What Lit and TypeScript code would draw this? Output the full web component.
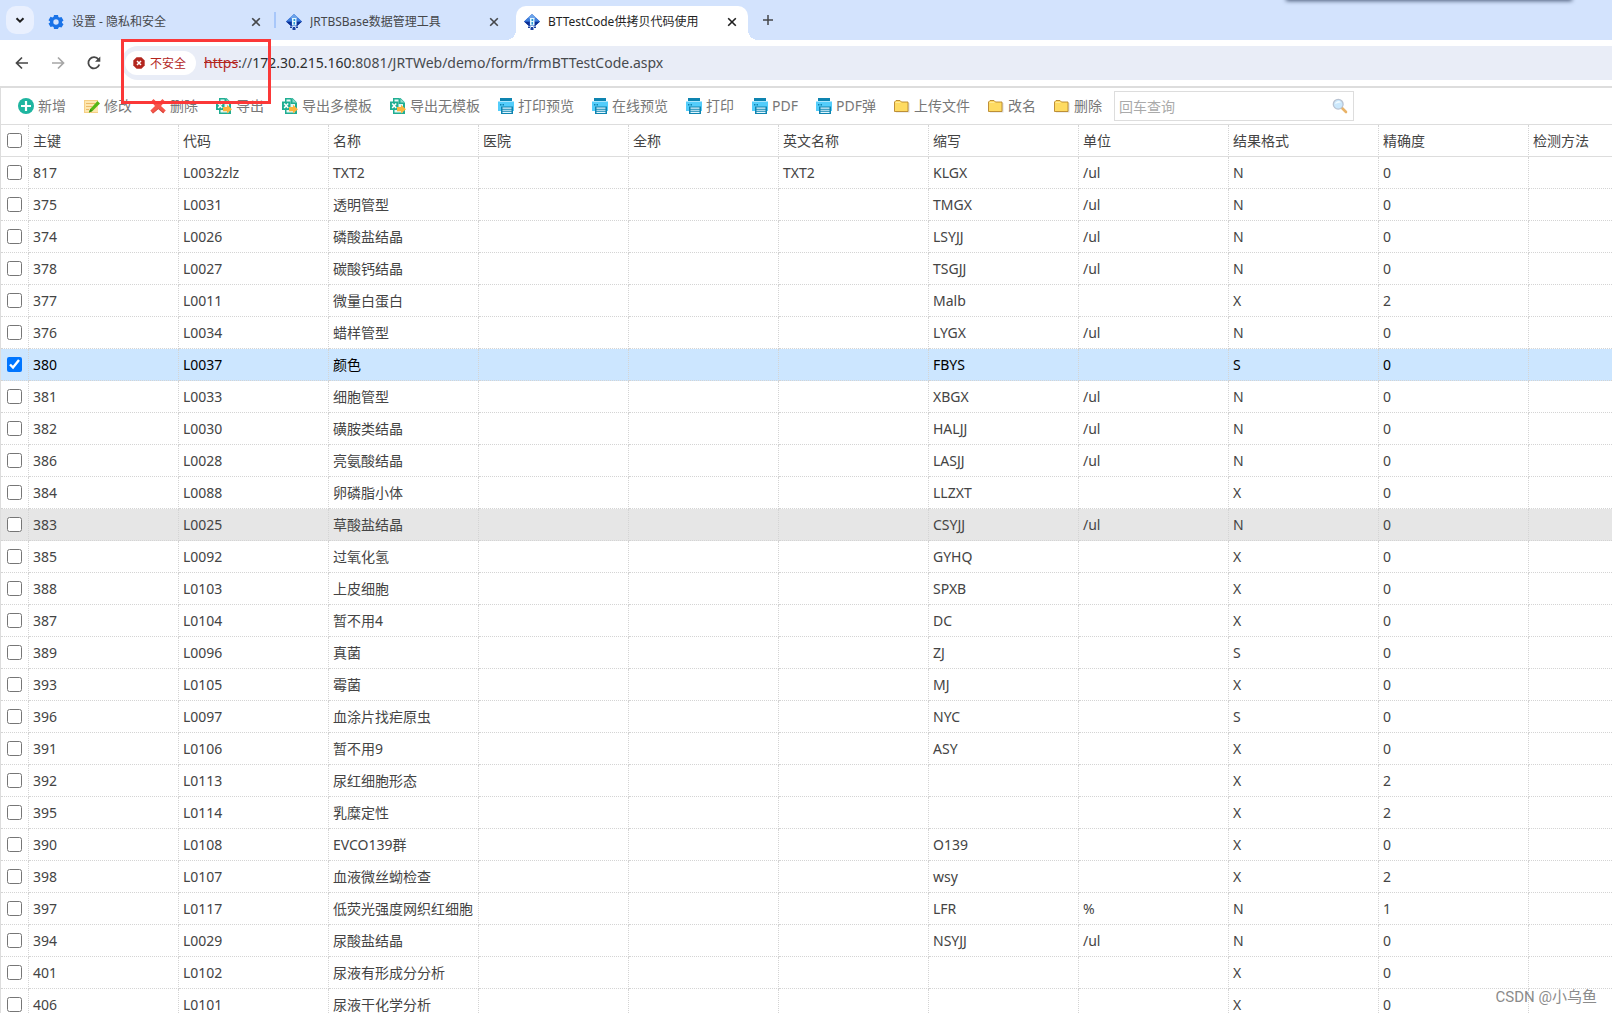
import { LitElement, html, css, svg, nothing } from "lit";
import { customElement, state } from "lit/decorators.js";
import { classMap } from "lit/directives/class-map.js";

const gear = svg`<path fill="#1a73e8" fill-rule="evenodd" d="M6 1h4l.4 1.9 1.2.7 1.9-.6 2 3.4-1.500 1.400v1l1.500 1.400-2 3.400-1.900-.600-1.200.700L10 15H6l-.400-1.900-1.200-.700-1.900.600-2-3.400L2 8.600v-1L.5 6.200l2-3.400 1.900.600 1.200-.700zM8 5.300a2.700 2.700 0 1 0 0 5.400 2.700 2.700 0 0 0 0-5.400z"/>`;
const diamond = svg`<path fill="#2257c4" d="M8 0l8 7.500-5 4.500H5L0 7.500z"/><path fill="#6ba3ea" d="M8 0l4.500 4.200L8 5.500 3.500 4.200z"/><path fill="#0c2f93" d="M0 7.500h5.500V12H5zM16 7.500h-5.500V12h.5z"/><path fill="#3f7fdd" d="M3.500 4.300L6 5v2.500H.500zM12.500 4.300L10.500 5v2.500h5z"/><path fill="#e2f6fd" d="M6 4h4.500v7.500H6z"/><path fill="#2b9ad8" d="M7.500 5h1.700v2H7.500zM7.500 8H9v2.500H7.500z"/><path fill="#1b409f" d="M4 12.500h2v1.500H4zM10 12.500h2v1.500h-2zM6.500 13h3v3h-3z"/><path fill="#a9c6ef" d="M6 12h1v2H6zM9 12h1v2H9z"/>`;
const add = svg`<circle cx="8" cy="8" r="8" fill="#1fb5a0"/><path fill="#fff" d="M6.900 3h2.200v3.900H13v2.200H9.100V13H6.900V9.100H3V6.900h3.900z"/>`;
const edit = svg`<path fill="#fde7b0" d="M0 2h14v13H0z"/><path fill="#f6cf84" d="M0 2h14v1H0zM0 14h14v1H0zM0 2h1v13H0z"/><path fill="#edba68" d="M2 5h9v1H2zM2 8h6v1H2zM2 11h3v1H2z"/><path fill="#56b614" d="M13.500 3L16 5.500 8.500 13l-3.500 1.500L6.200 11z"/><path fill="#398c0c" d="M6.200 11l2.300 2L5 14.500z"/>`;
const remove = svg`<path fill="#f6564b" d="M3.500 1L8 5.200 12.500 1 15 3.500 11 8l4.800 4.500-2.600 2.700L8.300 11 3 15.500 .4 12.500 5 8 1 3.500z"/><path fill="#d94a40" d="M.4 12.500L3 15.500 8.300 11l4.900 4.200 1-1.100L8.200 10.200 3 14.500z"/>`;
const excel = svg`<path fill="#1fae92" d="M3 0h7.500L15 4.500V16H3z"/><path fill="#e6f7f3" d="M4.500 1.500h4V6H13v8.500H4.500z"/><path fill="#8edccb" d="M9.500 0l5.500 5h-5.500z"/><path fill="#1fae92" d="M9 1h1.500v3.500H14V6H9z"/><path fill="#1fae92" d="M0 3.500h8.500v8.500H0z"/><path stroke="#fff" stroke-width="1.500" d="M2.200 5.500l4 4.600M6.200 5.500l-4 4.600"/><path fill="#fbb53c" d="M7 9h4V6.800l5 4.400-5 4.400v-2.400H7z"/>`;
const printer = svg`<path fill="#0e84b0" d="M2 0h12v3H2z"/><path fill="#53cdfb" d="M0 3.500h16V13H0z"/><path fill="#0e84b0" d="M2 6h1.500v1.500H2zM4.500 6H6v1.500H4.500zM3 8.500h12V16H3z"/><path fill="#dff5fe" d="M4.500 9.500h9v1.200h-9zM4.500 11.700h9v1.100h-9zM4.500 13.800h9v1.200h-9z"/>`;
const folder = svg`<path fill="#b9b9b9" opacity=".5" d="M2 5h13.500v9.500H2z"/><path fill="#fedb62" stroke="#b8862a" stroke-width=".9" d="M.5 4L2 2.500h4L7.500 4H14v9.500H.5z"/><path fill="#ffe998" d="M1.500 4h5v1h-5z"/>`;
const magnifier = svg`<path stroke="#e9b368" stroke-width="2.600" stroke-linecap="round" d="M10 10l4 4"/><circle cx="6.200" cy="6.200" r="4.900" fill="#cbe8fc" stroke="#b9c3d2" stroke-width="1.300"/><path fill="#eef9ff" d="M3 6a3.300 3.300 0 0 1 6-1.500C7 4.500 5 5 3 6z"/>`;
const cross = svg`<path stroke="currentColor" stroke-width="1.600" d="M4.200 4.200l7.600 7.600M11.800 4.200l-7.600 7.600"/>`;
const plus = svg`<path stroke="currentColor" stroke-width="1.500" d="M8 3v10M3 8h10"/>`;
const chevron = svg`<path fill="none" stroke="currentColor" stroke-width="2" d="M4.500 6.300L8 9.700l3.500-3.400"/>`;
const back = svg`<path fill="none" stroke="currentColor" stroke-width="1.700" d="M14 8H3M8 2.500L2.500 8 8 13.500"/>`;
const forward = svg`<path fill="none" stroke="currentColor" stroke-width="1.700" d="M2 8h11M8 2.500L13.500 8 8 13.500"/>`;
const reload = svg`<path fill="none" stroke="currentColor" stroke-width="1.800" d="M13.300 9.500A5.600 5.600 0 1 1 12.500 4.500"/><path fill="currentColor" d="M14.300 1.500v5.300H9z"/>`;
const danger = svg`<path fill="#b3261e" d="M5.200 1.500h5.600l3.700 3.700v5.600l-3.700 3.700H5.200l-3.700-3.700V5.200z"/><path stroke="#fff" stroke-width="1.700" d="M5.700 5.700l4.600 4.600M10.300 5.700l-4.600 4.600"/>`;

const icon = (shape: unknown, size = 16) =>
  html`<svg class="icon" width=${size} height=${size} viewBox="0 0 16 16" fill="none" aria-hidden="true">${shape}</svg>`;

const ACTIONS: [unknown, string][] = [
  [add, "新增"], [edit, "修改"], [remove, "删除"], [excel, "导出"],
  [excel, "导出多模板"], [excel, "导出无模板"], [printer, "打印预览"],
  [printer, "在线预览"], [printer, "打印"], [printer, "PDF"],
  [printer, "PDF弹"], [folder, "上传文件"], [folder, "改名"], [folder, "删除"],
];

const COLUMNS = ["主键", "代码", "名称", "医院", "全称", "英文名称", "缩写", "单位", "结果格式", "精确度", "检测方法"];

interface Item {
  id: string; code: string; name: string; en: string;
  abbr: string; unit: string; format: string; precision: string;
}

const ITEMS: Item[] = [
  "817|L0032zlz|TXT2|TXT2|KLGX|/ul|N|0",
  "375|L0031|透明管型||TMGX|/ul|N|0",
  "374|L0026|磷酸盐结晶||LSYJJ|/ul|N|0",
  "378|L0027|碳酸钙结晶||TSGJJ|/ul|N|0",
  "377|L0011|微量白蛋白||Malb||X|2",
  "376|L0034|蜡样管型||LYGX|/ul|N|0",
  "380|L0037|颜色||FBYS||S|0",
  "381|L0033|细胞管型||XBGX|/ul|N|0",
  "382|L0030|磺胺类结晶||HALJJ|/ul|N|0",
  "386|L0028|亮氨酸结晶||LASJJ|/ul|N|0",
  "384|L0088|卵磷脂小体||LLZXT||X|0",
  "383|L0025|草酸盐结晶||CSYJJ|/ul|N|0",
  "385|L0092|过氧化氢||GYHQ||X|0",
  "388|L0103|上皮细胞||SPXB||X|0",
  "387|L0104|暂不用4||DC||X|0",
  "389|L0096|真菌||ZJ||S|0",
  "393|L0105|霉菌||MJ||X|0",
  "396|L0097|血涂片找疟原虫||NYC||S|0",
  "391|L0106|暂不用9||ASY||X|0",
  "392|L0113|尿红细胞形态||||X|2",
  "395|L0114|乳糜定性||||X|2",
  "390|L0108|EVCO139群||O139||X|0",
  "398|L0107|血液微丝蚴检查||wsy||X|2",
  "397|L0117|低荧光强度网织红细胞||LFR|%|N|1",
  "394|L0029|尿酸盐结晶||NSYJJ|/ul|N|0",
  "401|L0102|尿液有形成分分析||||X|0",
  "406|L0101|尿液干化学分析||||X|0",
].map((line) => {
  const [id, code, name, en, abbr, unit, format, precision] = line.split("|");
  return { id, code, name, en, abbr, unit, format, precision };
});

const fonts = css`"Noto Sans", "Noto Sans CJK SC", sans-serif`;

@customElement("browser-chrome")
export class BrowserChrome extends LitElement {
  static styles = css`
    :host { display: block; font-family: ${fonts}; }
    .icon { display: block; flex: none; }
    button { border: 0; padding: 0; background: none; color: inherit; font-family: inherit; display: grid; place-items: center; flex: none; }
    .strip { display: flex; align-items: center; height: 40px; background: #d3e3fd; overflow: hidden; color: #45474a; position: relative; }
    .menu { width: 28px; height: 28px; border-radius: 10px; margin: 0 6px; background: #e9f0fe; color: #1f1f1f; }
    .tab { display: flex; align-items: center; gap: 8px; width: 232px; height: 34px; padding: 0 8px 2px; box-sizing: border-box; font-size: 12px; align-self: flex-end; position: relative; }
    .tab a { flex: 1; color: inherit; text-decoration: none; white-space: nowrap; overflow: hidden; line-height: 20px; }
    .divider { width: 2px; height: 16px; background: #a8c7fa; flex: none; margin: 0 2px; }
    .tab.active { background: #fff; color: #1f1f1f; border-radius: 10px 10px 0 0; margin-left: 6px; }
    .tab.active::before, .tab.active::after { content: ""; position: absolute; bottom: 0; width: 10px; height: 10px; }
    .tab.active::before { left: -10px; background: radial-gradient(circle at 0 0, transparent 10px, #fff 10px); }
    .tab.active::after { right: -10px; background: radial-gradient(circle at 100% 0, transparent 10px, #fff 10px); }
    .new { width: 20px; height: 28px; margin-left: 10px; }
    .shade { position: absolute; top: -10px; right: 40px; width: 286px; height: 10px; box-shadow: 0 1px 4px #4a5b78; }
    .bar { display: flex; align-items: center; height: 46px; background: #fff; color: #474747; padding-left: 14px; }
    .nav { display: flex; gap: 20px; }
    .nav .off { color: #a6a6a6; }
    .omnibox { flex: 1; display: flex; align-items: center; gap: 8px; height: 34px; margin-left: 19px; padding-left: 4px; background: #e9edf7; border-radius: 17px 0 0 17px; }
    .warning { display: flex; align-items: center; gap: 4px; height: 24px; padding: 0 10px 0 7px; border-radius: 12px; background: #fff; color: #b3261e; font-size: 12px; }
    .url { color: #474a4e; font-size: 14px; line-height: 20px; text-decoration: none; white-space: nowrap; }
    .scheme { color: #b3261e; text-decoration: line-through; }
    .host { color: #2c2d2f; }
  `;

  render() {
    return html`
      <div class="strip">
        <button class="menu" aria-label="搜索标签页">${icon(chevron)}</button>
        <div class="tab">${icon(gear)}<a href="#settings">设置 - 隐私和安全</a><button aria-label="关闭">${icon(cross)}</button></div>
        <div class="divider"></div>
        <div class="tab">${icon(diamond)}<a href="#base">JRTBSBase数据管理工具</a><button aria-label="关闭">${icon(cross)}</button></div>
        <div class="tab active">${icon(diamond)}<a href="#code">BTTestCode供拷贝代码使用</a><button aria-label="关闭">${icon(cross)}</button></div>
        <button class="new" aria-label="新标签页">${icon(plus)}</button>
        <div class="shade"></div>
      </div>
      <div class="bar">
        <div class="nav">
          <button aria-label="后退">${icon(back)}</button>
          <button class="off" aria-label="前进">${icon(forward)}</button>
          <button aria-label="重新加载">${icon(reload)}</button>
        </div>
        <div class="omnibox">
          <button class="warning">${icon(danger, 14)}<span>不安全</span></button>
          <a class="url" href="#code"><span class="scheme">https</span>://<span class="host">172.30.215.160</span>:8081/JRTWeb/demo/form/frmBTTestCode.aspx</a>
        </div>
      </div>
    `;
  }
}

@customElement("grid-toolbar")
export class GridToolbar extends LitElement {
  static styles = css`
    :host { display: flex; align-items: center; height: 36px; padding-left: 17px; background: #fff; font-family: ${fonts}; }
    .icon { display: block; flex: none; }
    .actions { display: flex; gap: 18px; }
    .action { display: flex; align-items: center; gap: 4px; border: 0; padding: 0; background: none; color: #777; font: inherit; font-size: 14px; line-height: 20px; white-space: nowrap; }
    .search { display: flex; align-items: center; box-sizing: border-box; width: 240px; height: 30px; margin-left: 12px; padding: 0 5px 0 4px; border: 1px solid #ddd; }
    .search input { flex: 1; min-width: 0; border: 0; padding: 0; outline: 0; background: none; font: inherit; font-size: 14px; color: #444; }
    .search input::placeholder { color: #aaa; }
    .go { border: 0; padding: 0; background: none; }
  `;

  render() {
    return html`
      <div class="actions">
        ${ACTIONS.map(([shape, label]) => html`<button class="action">${icon(shape)}<span>${label}</span></button>`)}
      </div>
      <div class="search">
        <input type="text" placeholder="回车查询" aria-label="回车查询" />
        <button class="go" aria-label="查询">${icon(magnifier)}</button>
      </div>
    `;
  }
}

@customElement("code-grid")
export class CodeGrid extends LitElement {
  static styles = css`
    :host { display: block; overflow: hidden; border-top: 1px solid #ddd; font-family: ${fonts}; }
    table { width: 100%; border-collapse: separate; border-spacing: 0; table-layout: fixed; font-size: 14px; line-height: 20px; color: #444; }
    .pick { width: 28px; }
    .field { width: 150px; }
    th, td { box-sizing: border-box; height: 32px; padding: 0 4px; border-right: 1px dotted #d4d4d4; border-bottom: 1px dotted #d4d4d4; text-align: left; font-weight: 400; white-space: nowrap; overflow: hidden; }
    th { border-bottom: 1px solid #ddd; }
    th:last-child, td:last-child { border-right: 0; }
    .check { padding: 0 0 0 6px; }
    .check input { display: block; width: 15px; height: 15px; margin: 0; accent-color: #0075ff; }
    .selected { background: #cce6ff; color: #000; }
    .hover { background: #e6e6e6; }
  `;

  @state() private checked = new Set(["380"]);
  @state() private hovered = "383";

  private toggle(id: string) {
    const next = new Set(this.checked);
    if (!next.delete(id)) next.add(id);
    this.checked = next;
  }

  render() {
    return html`
      <table>
        <colgroup>
          <col class="pick" />
          ${COLUMNS.slice(0, -1).map(() => html`<col class="field" />`)}
          <col />
        </colgroup>
        <thead>
          <tr>
            <th class="check"><input type="checkbox" aria-label="全选" /></th>
            ${COLUMNS.map((label) => html`<th scope="col">${label}</th>`)}
          </tr>
        </thead>
        <tbody>
          ${ITEMS.map((item) => html`
            <tr
              class=${classMap({ selected: this.checked.has(item.id), hover: this.hovered === item.id })}
              @mouseenter=${() => (this.hovered = item.id)}
            >
              <td class="check">
                <input type="checkbox" aria-label=${item.id} .checked=${this.checked.has(item.id)} @change=${() => this.toggle(item.id)} />
              </td>
              ${[item.id, item.code, item.name, "", "", item.en, item.abbr, item.unit, item.format, item.precision, ""].map(
                (value) => html`<td>${value || nothing}</td>`,
              )}
            </tr>
          `)}
        </tbody>
      </table>
    `;
  }
}

@customElement("app-root")
export class AppRoot extends LitElement {
  static styles = css`
    :host { display: flex; flex-direction: column; height: 100vh; overflow: hidden; position: relative; background: #fff; font-family: ${fonts}; }
    .page { flex: 1; min-height: 0; display: flex; flex-direction: column; border-top: 2px solid #ddd; border-left: 1px solid #ddd; }
    .grid { flex: 1; min-height: 0; }
    .frame { position: absolute; left: 121px; top: 39px; width: 150px; height: 65px; box-sizing: border-box; border: 3px solid #fb3838; pointer-events: none; }
    .mark { position: absolute; right: 15px; bottom: 6px; font-family: Roboto, "Noto Sans CJK SC", sans-serif; font-size: 15px; line-height: 20px; color: #8b8b8b; }
  `;

  render() {
    return html`
      <browser-chrome></browser-chrome>
      <main class="page">
        <grid-toolbar></grid-toolbar>
        <code-grid class="grid"></code-grid>
      </main>
      <div class="frame"></div>
      <div class="mark">CSDN @小乌鱼</div>
    `;
  }
}
